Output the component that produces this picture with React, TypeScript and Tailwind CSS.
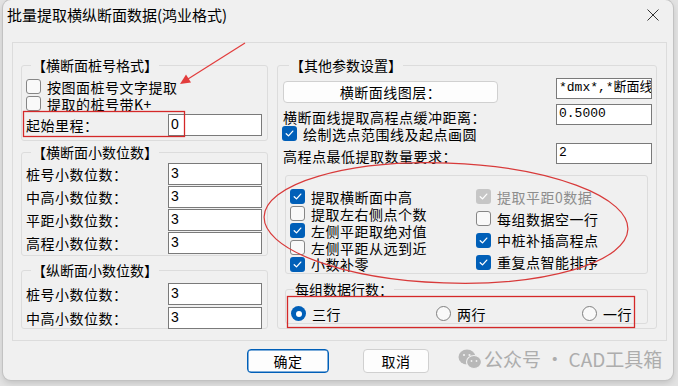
import React from "react";

const ui = "font-['Noto_Sans_CJK_SC',sans-serif]";
const mono = "font-['Liberation_Mono','Noto_Sans_CJK_SC',monospace]";

function Check({ checked, disabled }: { checked?: boolean; disabled?: boolean }) {
  if (!checked) {
    return <span className="h-[15px] w-[15px] shrink-0 rounded-[3px] border border-[#868686] bg-[#f9f9f9]" />;
  }
  return (
    <span
      className={`flex h-[15px] w-[15px] shrink-0 items-center justify-center rounded-[3px] ${
        disabled ? "bg-[#c6c6c6]" : "bg-[#005fb8]"
      }`}
    >
      <svg width="11" height="11" viewBox="0 0 11 11">
        <path d="M2.2 5.7 L4.5 7.9 L8.8 3.1" stroke="white" strokeWidth="1.3" fill="none" strokeLinecap="round" strokeLinejoin="round" />
      </svg>
    </span>
  );
}

function CheckRow({
  label,
  checked,
  disabled,
  className = "",
}: {
  label: string;
  checked?: boolean;
  disabled?: boolean;
  className?: string;
}) {
  return (
    <div className={`flex items-center gap-[6px] ${className}`}>
      <Check checked={checked} disabled={disabled} />
      <span className={`leading-[16px] ${disabled ? "text-[#8d8d8d]" : "text-black"}`}>{label}</span>
    </div>
  );
}

function Radio({ selected, label }: { selected?: boolean; label: string }) {
  return (
    <div className="flex h-[17px] items-center gap-[6px]">
      {selected ? (
        <span className="flex h-[15px] w-[15px] items-center justify-center rounded-full bg-[#005fb8]">
          <span className="h-[6px] w-[6px] rounded-full bg-white" />
        </span>
      ) : (
        <span className="h-[15px] w-[15px] rounded-full border border-[#7f7f7f] bg-[#f9f9f9]" />
      )}
      <span className="leading-[16px]">{label}</span>
    </div>
  );
}

function Field({ value, className = "" }: { value: string; className?: string }) {
  return (
    <div className={`overflow-hidden whitespace-nowrap border border-[#7a7a7a] bg-white pl-[2px] leading-[18px] tracking-normal ${className}`}>
      {value}
    </div>
  );
}

function Group({
  legend,
  legendClass,
  className,
  children,
}: {
  legend: string;
  legendClass: string;
  className: string;
  children: React.ReactNode;
}) {
  return (
    <div className={`relative rounded-[3px] border border-[#dcdcdc] ${className}`}>
      <span className={`absolute -top-[9px] bg-[#f0f0f0] px-[1px] leading-[16px] tracking-normal ${legendClass}`}>{legend}</span>
      {children}
    </div>
  );
}

function LabelField({ label, value }: { label: string; value: string }) {
  return (
    <div className="flex h-[22px] items-center">
      <span className="w-[142px] leading-[16px]">{label}</span>
      <Field value={value} className="h-[22px] w-[94px] font-['Liberation_Sans',sans-serif]" />
    </div>
  );
}

export default function App() {
  return (
    <div className={`relative h-[386px] w-[678px] overflow-hidden bg-[#e2e2e2] text-[14px] tracking-[0.5px] text-black ${ui}`}>
      <div className="ml-[3px] flex h-[380px] w-[670px] flex-col rounded-[8px] bg-[#f0f0f0] shadow-[0_0_0_1px_#c2c2c2,0_3px_6px_rgba(0,0,0,0.15)]">
        {/* title bar */}
        <div className="flex h-[30px] items-center justify-between pl-[4px] pr-[14px]">
          <span className="text-[15px] leading-[18px] tracking-normal">批量提取横纵断面数据(鸿业格式)</span>
          <svg width="12" height="12" viewBox="0 0 12 12">
            <path d="M0.5 0.5 L11.5 11.5 M11.5 0.5 L0.5 11.5" stroke="#333" strokeWidth="1" />
          </svg>
        </div>

        {/* main panel */}
        <div className="ml-[9px] mt-[12px] flex h-[299px] w-[655px] items-start border border-[#dcdcdc]">
          {/* left column */}
          <div className="ml-[8px] flex w-[247px] flex-col">
            <Group legend="【横断面桩号格式】" legendClass="left-[9px]" className="mt-[22px] h-[76px] pl-[4px] pt-[12px]">
              <CheckRow label="按图面桩号文字提取" className="h-[17px] gap-[5px]" />
              <CheckRow label="提取的桩号带K+" className="h-[17px] gap-[5px]" />
              <div className="mt-[2px]">
                <LabelField label="起始里程：" value="0" />
              </div>
            </Group>

            <Group
              legend="【横断面小数位数】"
              legendClass="left-[9px]"
              className="mt-[11px] flex h-[104px] flex-col gap-[1px] pl-[4px] pt-[10px]"
            >
              <LabelField label="桩号小数位数：" value="3" />
              <LabelField label="中高小数位数：" value="3" />
              <LabelField label="平距小数位数：" value="3" />
              <LabelField label="高程小数位数：" value="3" />
            </Group>

            <Group
              legend="【纵断面小数位数】"
              legendClass="left-[9px]"
              className="mt-[14px] flex h-[59px] flex-col gap-[2px] pl-[4px] pt-[12px]"
            >
              <LabelField label="桩号小数位数：" value="3" />
              <LabelField label="中高小数位数：" value="3" />
            </Group>
          </div>

          {/* right column */}
          <Group
            legend="【其他参数设置】"
            legendClass="left-[11px]"
            className="ml-[9px] mt-[22px] h-[264px] w-[380px] pl-[5px] pr-[4px]"
          >
            <div className="mt-[12px] flex items-start justify-between">
              <div className="mt-[3px] flex h-[22px] w-[215px] items-center justify-center rounded-[4px] border border-[#d0d0d0] bg-[#fdfdfd]">
                横断面线图层：
              </div>
              <Field value="*dmx*,*断面线" className={`h-[21px] w-[96px] text-[13px] ${mono}`} />
            </div>
            <div className="mt-[1px] flex h-[21px] items-end justify-between">
              <span className="leading-[16px]">横断面线提取高程点缓冲距离：</span>
              <Field value="0.5000" className={`h-[21px] w-[96px] text-[13px] ${mono}`} />
            </div>
            <CheckRow checked label="绘制选点范围线及起点画圆" className="-ml-[1px] h-[17px] gap-[5px]" />
            <div className="mt-[1px] flex h-[21px] items-end justify-between">
              <span className="leading-[16px]">高程点最低提取数量要求：</span>
              <Field value="2" className={`h-[21px] w-[96px] text-[13px] ${mono}`} />
            </div>

            <div className="ml-[2px] mt-[11px] flex h-[99px] w-[363px] rounded-[3px] border border-[#dcdcdc]">
              <div className="flex w-[190px] flex-col pl-[4px] pt-[12px]">
                <CheckRow checked label="提取横断面中高" className="h-[17px]" />
                <CheckRow label="提取左右侧点个数" className="h-[17px]" />
                <CheckRow checked label="左侧平距取绝对值" className="h-[17px]" />
                <CheckRow label="左侧平距从远到近" className="h-[17px]" />
                <CheckRow checked label="小数补零" className="h-[16px]" />
              </div>
              <div className="flex flex-col pt-[10px]">
                <CheckRow checked disabled label="提取平距0数据" className="h-[22px]" />
                <CheckRow label="每组数据空一行" className="h-[22px]" />
                <CheckRow checked label="中桩补插高程点" className="h-[22px]" />
                <CheckRow checked label="重复点智能排序" className="h-[22px]" />
              </div>
            </div>

            <Group
              legend="每组数据行数："
              legendClass="left-[8px]"
              className="ml-[2px] mt-[15px] flex h-[35px] w-[363px] pl-[5px] pt-[15px]"
            >
              <div className="w-[145px]">
                <Radio selected label="三行" />
              </div>
              <div className="w-[146px]">
                <Radio label="两行" />
              </div>
              <Radio label="一行" />
            </Group>
          </Group>
        </div>

        {/* buttons */}
        <div className="ml-[244px] mt-[8px] flex gap-[34px]">
          <button className="h-[24px] w-[82px] rounded-[4px] border border-[#005fb8] bg-[#fdfdfd] leading-[16px] shadow-[inset_0_0_0_0.5px_#005fb8]">
            确定
          </button>
          <button className="h-[24px] w-[66px] rounded-[4px] border border-[#d0d0d0] bg-[#fdfdfd] leading-[16px]">
            取消
          </button>
        </div>
      </div>

      {/* watermark */}
      <div className="absolute left-[458px] top-[347px] flex items-center gap-[2px] text-[19px] leading-[24px] tracking-normal text-[#adadad]">
        <svg width="24" height="22" viewBox="0 0 24 22">
          <ellipse cx="9" cy="9" rx="8.5" ry="7.5" fill="#b8b8b8" />
          <ellipse cx="16" cy="14" rx="7.5" ry="6.5" fill="#b8b8b8" stroke="#f0f0f0" strokeWidth="1.2" />
          <circle cx="6" cy="7" r="1.1" fill="#f0f0f0" />
          <circle cx="11.5" cy="7" r="1.1" fill="#f0f0f0" />
          <circle cx="13.5" cy="13" r="0.9" fill="#f0f0f0" />
          <circle cx="18.5" cy="13" r="0.9" fill="#f0f0f0" />
        </svg>
        <span>公众号 · CAD工具箱</span>
      </div>

      {/* red annotations */}
      <svg className="pointer-events-none absolute left-0 top-0" width="678" height="386" viewBox="0 0 678 386">
        <line x1="245" y1="43" x2="188" y2="79" stroke="#e23c3c" strokeWidth="1.2" />
        <path d="M180 84 L186 74.5 L191 82.5 Z" fill="#e23c3c" />
        <rect x="23.5" y="111.5" width="161" height="25" fill="none" stroke="#d42828" strokeWidth="1.3" />
        <ellipse
          cx="446"
          cy="223"
          rx="182"
          ry="60"
          fill="none"
          stroke="#d83a3a"
          strokeWidth="1.2"
          transform="rotate(2 446 223)"
        />
        <rect x="287.5" y="296.5" width="347" height="31" fill="none" stroke="#d42828" strokeWidth="1.3" />
      </svg>
    </div>
  );
}
